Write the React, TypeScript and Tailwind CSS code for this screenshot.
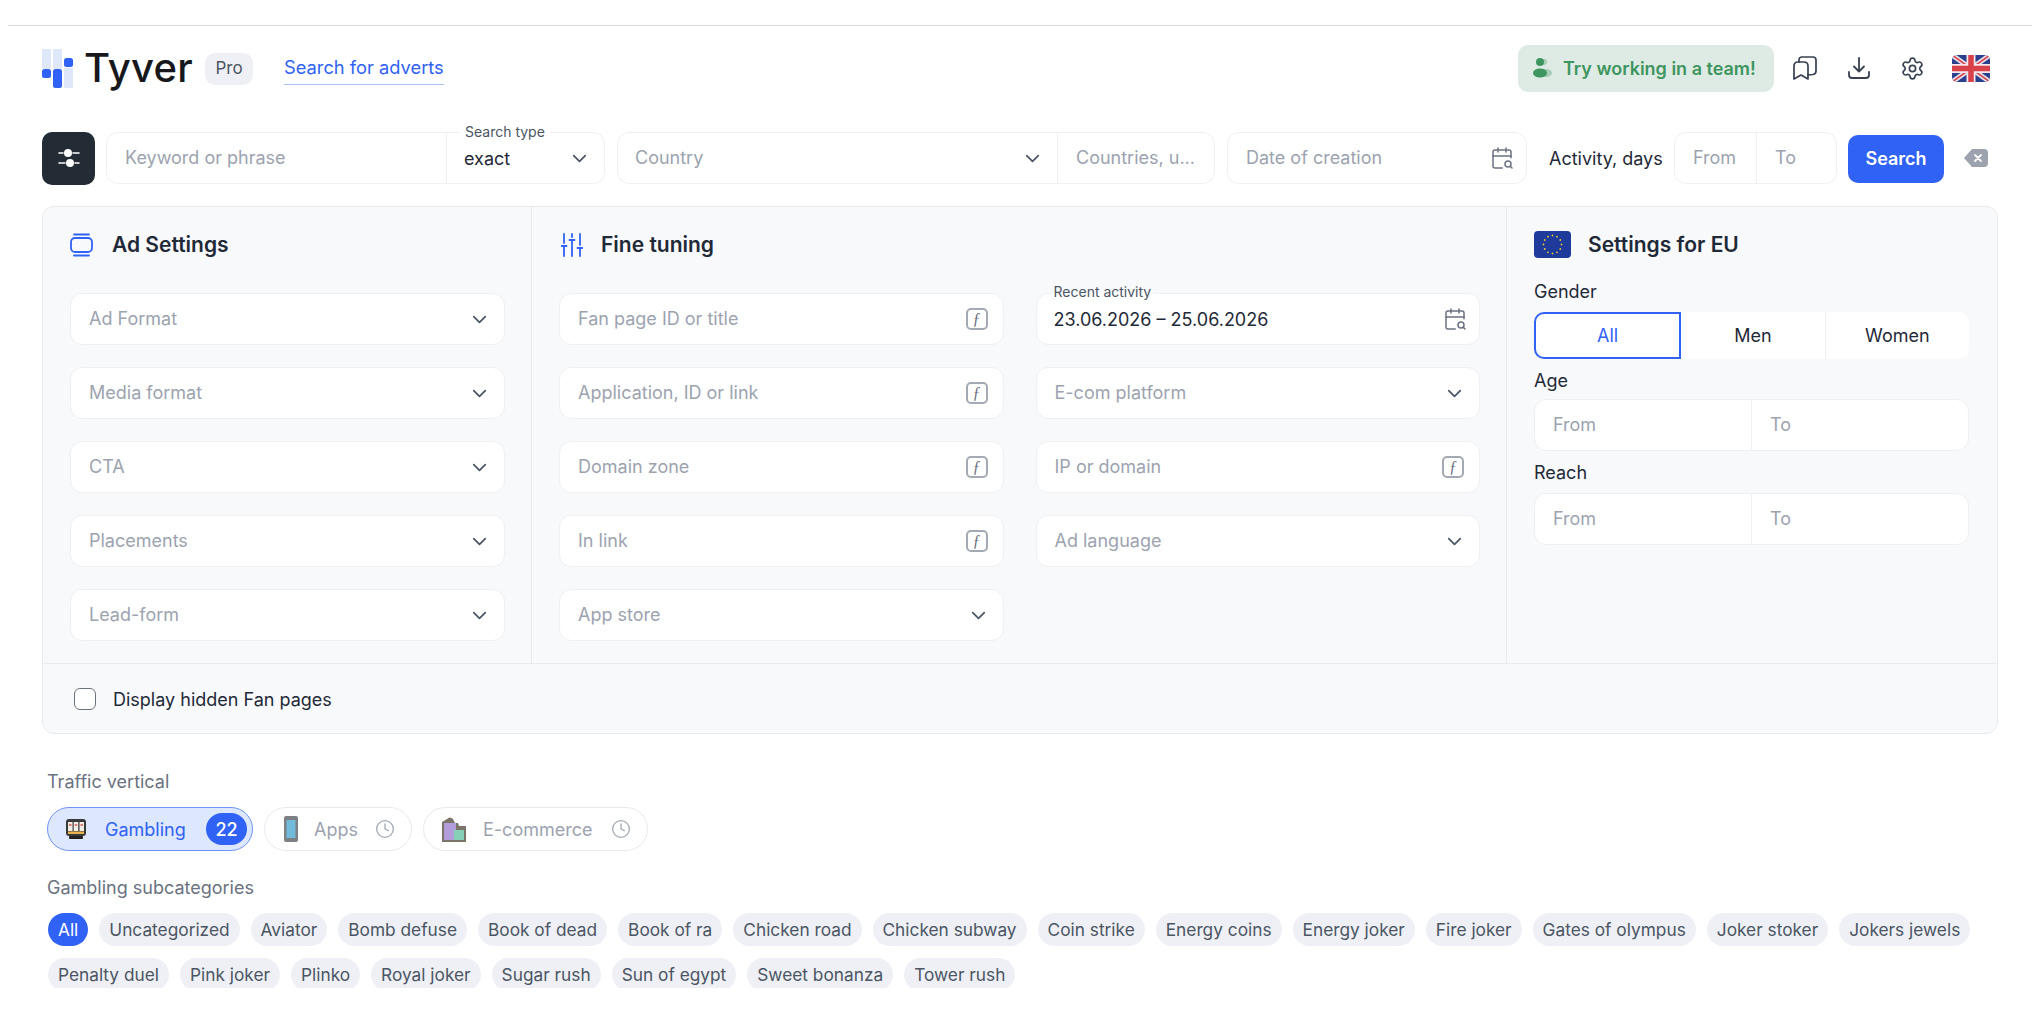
import { ReactNode } from "react";
import { CalendarSearch, ChevronDown, Clock, Settings } from "lucide-react";

const placeholder = "text-[#9ca3af] pb-[2px]";

const Chevron = () => <ChevronDown size={23} strokeWidth={1.8} className="text-[#4b5563] shrink-0" />;

const FIcon = () => (
    <span className="w-[22px] h-[22px] shrink-0 rounded-[5px] border-2 border-[#a3aab3] flex items-center justify-center text-[16px] italic text-[#6b7280] font-['Liberation_Serif',serif]">ƒ</span>
);

const Box = ({ children, className = "" }: { children: ReactNode; className?: string }) => (
    <div className={`h-[52px] flex items-center bg-white border border-[#eef0f3] rounded-[12px] ${className}`}>{children}</div>
);

const SelectField = ({ label }: { label: string }) => (
    <Box className="justify-between pl-[18px] pr-[13px]">
        <span className={placeholder}>{label}</span>
        <Chevron />
    </Box>
);

const LinkField = ({ label }: { label: string }) => (
    <Box className="justify-between pl-[18px] pr-[15px]">
        <span className={placeholder}>{label}</span>
        <FIcon />
    </Box>
);

const RangeField = ({ className = "" }: { className?: string }) => (
    <Box className={className}>
        <span className={`flex-1 pl-[18px] h-full flex items-center border-r border-[#eef0f3] ${placeholder}`}>From</span>
        <span className={`flex-1 pl-[18px] ${placeholder}`}>To</span>
    </Box>
);

const Logo = () => (
    <svg width="31" height="39" viewBox="0 0 31 39" className="shrink-0">
        <rect x="0" y="0" width="9" height="20" fill="#dfe7fb" />
        <rect x="11" y="0" width="9" height="20" fill="#dfe7fb" />
        <rect x="22" y="19" width="9" height="20" fill="#dfe7fb" />
        <rect x="22" y="9" width="9" height="9" rx="2.5" fill="#2f62f5" />
        <rect x="0" y="20" width="9" height="9" rx="2.5" fill="#2f62f5" />
        <rect x="11" y="20" width="9" height="19" rx="2.5" fill="#2f62f5" />
    </svg>
);

const UkFlag = () => (
    <svg width="38" height="27" viewBox="0 0 38 27" className="rounded-[5px] shrink-0">
        <rect width="38" height="27" fill="#2b3f8f" />
        <path d="M0 0L38 27M38 0L0 27" stroke="#e8dfe6" strokeWidth="5" />
        <path d="M0 0L38 27M38 0L0 27" stroke="#d9454f" strokeWidth="1.6" />
        <path d="M19 0V27M0 13.5H38" stroke="#f4e6ea" strokeWidth="9" />
        <path d="M19 0V27M0 13.5H38" stroke="#d9404a" strokeWidth="5.5" />
    </svg>
);

const EuFlag = () => {
    const stars = Array.from({ length: 12 }, (_, i) => i * 30);
    return (
        <svg width="37" height="27" viewBox="0 0 37 27" className="rounded-[4px] shrink-0">
            <rect width="37" height="27" fill="#1e3a9a" />
            {stars.map((a) => (
                <circle key={a} cx={18.5 + 9 * Math.cos((a * Math.PI) / 180)} cy={13.5 + 9 * Math.sin((a * Math.PI) / 180)} r="0.9" fill="#e3c83c" />
            ))}
        </svg>
    );
};

const Section = ({ icon, title }: { icon: ReactNode; title: string }) => (
    <div className="h-[27px] flex items-center font-semibold text-[21px] text-[#1f2937]">
        {icon}
        {title}
    </div>
);

const SlotIcon = () => (
    <svg width="22" height="22" viewBox="0 0 22 22" className="shrink-0">
        <rect x="1" y="1" width="20" height="17" rx="3" fill="#3a3a3c" />
        <rect x="3" y="4" width="4.5" height="9" fill="#f4eee6" />
        <rect x="8.7" y="4" width="4.5" height="9" fill="#f4eee6" />
        <rect x="14.5" y="4" width="4.5" height="9" fill="#f4eee6" />
        <path d="M4 7H6.500M9.700 7H12.200M15.500 7H18" stroke="#d9534f" strokeWidth="1.5" />
        <rect x="3" y="13.5" width="16" height="2.5" fill="#e9b44c" />
        <rect x="4" y="18" width="14" height="3" rx="1" fill="#222" />
    </svg>
);

const PhoneIcon = () => (
    <svg width="14" height="26" viewBox="0 0 14 26" className="shrink-0 opacity-90">
        <rect x="0" y="0" width="14" height="26" rx="2" fill="#6f7478" />
        <rect x="2.500" y="4" width="9" height="18" fill="#62b3d6" />
    </svg>
);

const BagsIcon = () => (
    <svg width="24" height="26" viewBox="0 0 24 26" className="shrink-0">
        <path d="M5 3Q8 0 11 3L13 7H16L17 10H24V26H0V6Z" fill="#7b7468" />
        <rect x="2" y="7" width="12" height="17" fill="#b39ddb" />
        <rect x="12" y="14" width="10" height="10" fill="#86d0b8" />
    </svg>
);

const subcategoriesA = ["Uncategorized", "Aviator", "Bomb defuse", "Book of dead", "Book of ra", "Chicken road", "Chicken subway", "Coin strike", "Energy coins", "Energy joker", "Fire joker", "Gates of olympus", "Joker stoker", "Jokers jewels", "Penalty duel", "Pink joker", "Plinko", "Royal joker", "Sugar rush", "Sun of egypt", "Sweet bonanza", "Tower rush"];

const App = () => {
    return (
        <div className="h-[988px] overflow-hidden bg-white pt-[25px] text-[18px] text-[#1f2937] font-['Inter',sans-serif]">
            <div className="ml-2 border-t border-[#d8dade]" />
            <div className="pl-[42px] pr-[34px]">
                {/* top bar */}
                <div className="h-[106px] flex items-center pb-[22px] pr-[8px]">
                    <Logo />
                    <span className="ml-[11px] w-[108px] text-[40px] leading-none font-medium tracking-[0.2px] text-[#16181c]">Tyver</span>
                    <span className="ml-[13px] mt-[2px] w-[48px] h-[32px] rounded-[10px] bg-[#eef0f5] flex items-center justify-center text-[#4b5563] text-[17px]">Pro</span>
                    <span className="ml-[31px] h-[32px] flex items-center border-b border-[#a9c1fb] text-[#2f62f5] text-[18.300px] mt-[1px]">Search for adverts</span>
                    <div className="ml-auto flex items-center">
                        <span className="h-[47px] w-[256px] rounded-[10px] bg-[#deebe4] flex items-center pl-[14px] text-[#3f9560] font-semibold text-[18px] whitespace-nowrap">
                            <svg width="20" height="22" viewBox="0 0 20 22" className="mr-[11px] shrink-0">
                                <circle cx="8" cy="5" r="4" fill="#3f9560" />
                                <circle cx="12" cy="5" r="3" fill="#3f9560" opacity="0.35" />
                                <ellipse cx="14" cy="16" rx="6" ry="4" fill="#3f9560" opacity="0.35" />
                                <ellipse cx="8" cy="16" rx="7" ry="4.5" fill="#3f9560" />
                            </svg>
                            Try working in a team!
                        </span>
                        <svg width="24" height="25" viewBox="0 0 24 25" fill="none" stroke="#374151" strokeWidth="1.7" strokeLinejoin="round" strokeLinecap="round" className="ml-[19px]">
                            <path d="M1 10Q1 6 5 6H11Q15 6 15 10V23L8 19L1 23Z" />
                            <path d="M6 6V4Q6 1 9 1H20Q23 1 23 4V15Q23 18 20 18.500L15 19" />
                        </svg>
                        <svg width="22" height="22" viewBox="0 0 22 22" fill="none" stroke="#374151" strokeWidth="1.8" strokeLinecap="round" strokeLinejoin="round" className="ml-[31px]">
                            <path d="M11 1V14M6 9.500L11 14.500L16 9.500" />
                            <path d="M1 15V18Q1 21 4 21H18Q21 21 21 18V15" />
                        </svg>
                        <Settings size={25} strokeWidth={1.6} className="ml-[30px] text-[#374151]" />
                        <span className="ml-[27px] flex"><UkFlag /></span>
                    </div>
                </div>

                {/* search row */}
                <div className="flex items-center h-[52px]">
                    <div className="w-[53px] h-[53px] rounded-[10px] bg-[#232b35] flex items-center justify-center shrink-0">
                        <svg width="22" height="22" viewBox="0 0 22 22" stroke="#fff" strokeWidth="1.6" fill="#fff" strokeLinecap="round">
                            <path d="M1 6H5M15 6H21M1 16H7M17 16H21" />
                            <circle cx="10" cy="6" r="4" stroke="none" />
                            <circle cx="12" cy="16" r="4" stroke="none" />
                        </svg>
                    </div>
                    <Box className="relative ml-[11px] w-[499px] shrink-0">
                        <span className={`w-[340px] pl-[18px] h-full flex items-center border-r border-[#eef0f3] ${placeholder}`}>Keyword or phrase</span>
                        <span className="flex-1 pl-[17px] pr-[13px] flex items-center justify-between">exact<Chevron /></span>
                        <span className="absolute left-[353px] -top-[10px] px-[5px] bg-white text-[14px] leading-[17px] text-[#4b5563] whitespace-nowrap">Search type</span>
                    </Box>
                    <Box className="ml-[12px] w-[598px] shrink-0">
                        <span className="w-[440px] pl-[17px] pr-[13px] h-full flex items-center justify-between border-r border-[#eef0f3]">
                            <span className={placeholder}>Country</span><Chevron />
                        </span>
                        <span className={`pl-[18px] whitespace-nowrap ${placeholder}`}>Countries, u...</span>
                    </Box>
                    <Box className="ml-[12px] w-[300px] shrink-0 justify-between pl-[18px] pr-[12px]">
                        <span className={placeholder}>Date of creation</span>
                        <CalendarSearch size={24} strokeWidth={1.5} className="text-[#6b7280]" />
                    </Box>
                    <span className="ml-[22px] w-[125px] shrink-0 whitespace-nowrap">Activity, days</span>
                    <Box className="w-[163px] shrink-0">
                        <span className={`w-[82px] pl-[18px] h-full flex items-center border-r border-[#eef0f3] ${placeholder}`}>From</span>
                        <span className={`pl-[18px] ${placeholder}`}>To</span>
                    </Box>
                    <span className="ml-[11px] mt-[1px] w-[96px] h-[48px] rounded-[10px] bg-[#2f62f5] text-white font-semibold flex items-center justify-center shrink-0">Search</span>
                    <svg width="24" height="18" viewBox="0 0 24 18" className="ml-[20px] shrink-0">
                        <path d="M8 0H20Q24 0 24 4V14Q24 18 20 18H8L0 9Z" fill="#9ca3af" />
                        <path d="M11 6L17 12M17 6L11 12" stroke="#fff" strokeWidth="1.8" strokeLinecap="round" />
                    </svg>
                </div>

                {/* filters panel */}
                <div className="mt-[22px] h-[528px] bg-[#f8f9fb] border border-[#e8eaee] rounded-[12px]">
                    <div className="h-[457px] flex border-b border-[#e8eaee]">
                        <div className="w-[489px] border-r border-[#e8eaee] pt-[24px] pl-[27px] pr-[26px] shrink-0">
                            <Section
                                title="Ad Settings"
                                icon={
                                    <svg width="24" height="24" viewBox="0 0 24 24" fill="none" stroke="#2f62f5" strokeWidth="1.8" strokeLinecap="round" className="mr-[18px]">
                                        <rect x="1" y="5" width="21" height="14" rx="4" />
                                        <path d="M4 1.500H19M4 22.500H19" />
                                    </svg>
                                }
                            />
                            <div className="mt-[35px] flex flex-col gap-[22px]">
                                {["Ad Format", "Media format", "CTA", "Placements", "Lead-form"].map((item) => <SelectField key={item} label={item} />)}
                            </div>
                        </div>
                        <div className="w-[975px] border-r border-[#e8eaee] pt-[24px] pl-[27px] pr-[26px] shrink-0">
                            <Section
                                title="Fine tuning"
                                icon={
                                    <svg width="22" height="24" viewBox="0 0 22 24" fill="none" stroke="#2f62f5" strokeWidth="1.8" strokeLinecap="round" className="mr-[18px] ml-[2px]">
                                        <path d="M3 1V10M3 14V23M11 1V4M11 8V23M19 1V12M19 16V23M0.500 13H5.500M8.500 7H13.500M16.500 15H21.500" />
                                    </svg>
                                }
                            />
                            <div className="mt-[35px] grid grid-cols-2 gap-x-[32px] gap-y-[22px]">
                                <LinkField label="Fan page ID or title" />
                                <Box className="relative justify-between pl-[17px] pr-[12px]">
                                    <span className="absolute left-[15px] -top-[11px] px-[2px] bg-gradient-to-b from-[#f8f9fb] from-60% to-white to-60% text-[14px] leading-[17px] text-[#4b5563] whitespace-nowrap">Recent activity</span>
                                    <span>23.06.2026 – 25.06.2026</span>
                                    <CalendarSearch size={24} strokeWidth={1.5} className="text-[#6b7280]" />
                                </Box>
                                <LinkField label="Application, ID or link" />
                                <SelectField label="E-com platform" />
                                <LinkField label="Domain zone" />
                                <LinkField label="IP or domain" />
                                <LinkField label="In link" />
                                <SelectField label="Ad language" />
                                <SelectField label="App store" />
                            </div>
                        </div>
                        <div className="flex-1 pt-[24px] pl-[27px] pr-[28px]">
                            <Section title="Settings for EU" icon={<span className="mr-[17px] flex"><EuFlag /></span>} />
                            <div className="mt-[24px] leading-[20px]">Gender</div>
                            <div className="mt-[10px] h-[47px] flex bg-white rounded-[10px] text-center">
                                <span className="flex-1 flex items-center justify-center border-2 border-[#2f62f5] rounded-l-[10px] text-[#2f62f5]">All</span>
                                <span className="flex-1 flex items-center justify-center border-r border-[#eef0f3]">Men</span>
                                <span className="flex-1 flex items-center justify-center">Women</span>
                            </div>
                            <div className="mt-[12px] leading-[20px]">Age</div>
                            <RangeField className="mt-[8px]" />
                            <div className="mt-[12px] leading-[20px]">Reach</div>
                            <RangeField className="mt-[10px]" />
                        </div>
                    </div>
                    <div className="h-[69px] flex items-center pl-[31px]">
                        <span className="w-[22px] h-[22px] rounded-[6px] border-[1.5px] border-[#6b7280] bg-white" />
                        <span className="ml-[17px] pt-[1px]">Display hidden Fan pages</span>
                    </div>
                </div>

                {/* traffic vertical */}
                <div className="ml-[5px] mt-[36px] leading-[24px] text-[#6b7280]">Traffic vertical</div>
                <div className="ml-[5px] mt-[13px] flex gap-[11px] h-[44px]">
                    <span className="w-[206px] rounded-full border border-[#6f95f8] bg-[#dde7fd] flex items-center pl-[17px] text-[#2f62f5]">
                        <SlotIcon />
                        <span className="ml-[18px]">Gambling</span>
                        <span className="ml-auto mr-[5px] w-[41px] h-[32px] rounded-full bg-[#2f62f5] text-white flex items-center justify-center font-medium">22</span>
                    </span>
                    <span className="w-[148px] rounded-full border border-[#e8eaee] flex items-center pl-[19px] text-[#9ca3af]">
                        <PhoneIcon />
                        <span className="ml-[16px]">Apps</span>
                        <Clock size={20} strokeWidth={1.6} className="ml-auto mr-[16px] text-[#a3aab3]" />
                    </span>
                    <span className="w-[225px] rounded-full border border-[#e8eaee] flex items-center pl-[18px] text-[#9ca3af]">
                        <BagsIcon />
                        <span className="ml-[17px]">E-commerce</span>
                        <Clock size={20} strokeWidth={1.6} className="ml-auto mr-[16px] text-[#a3aab3]" />
                    </span>
                </div>

                {/* subcategories */}
                <div className="ml-[5px] mt-[25px] leading-[24px] text-[#6b7280]">Gambling subcategories</div>
                <div className="ml-[6px] mt-[13px] flex flex-wrap gap-x-[11px] gap-y-[12px] text-[17.300px] w-[1940px]">
                    <span className="h-[33px] px-[10px] rounded-full bg-[#2f62f5] text-white flex items-center">All</span>
                    {subcategoriesA.map((item) => (
                        <span key={item} className="h-[33px] px-[10px] rounded-full bg-[#eef0f5] text-[#4b5563] flex items-center">{item}</span>
                    ))}
                </div>
            </div>
        </div>
    )
}
export default App;
